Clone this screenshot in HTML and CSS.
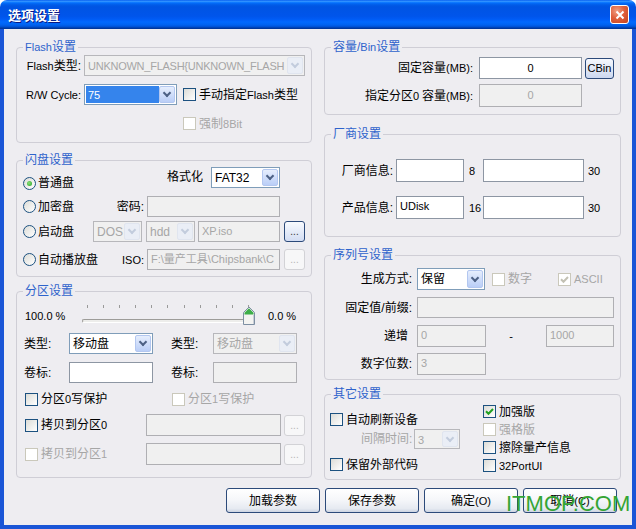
FILE: index.html
```html
<!DOCTYPE html>
<html lang="zh-CN">
<head>
<meta charset="utf-8">
<title>选项设置</title>
<link rel="stylesheet" href="styles.css">
</head>
<body>
<div class="window">
  <div class="titlebar">
    <span class="title">选项设置</span>
    <span class="close"><svg width="10" height="10" viewBox="0 0 10 10"><path d="M1.5 1.5L8.5 8.5M8.5 1.5L1.5 8.5" stroke="#fff" stroke-width="2"/></svg></span>
  </div>
  <div class="frame">
    <div class="columns">
      <div class="col col-left">
        <section class="group g-flash">
          <div class="gtitle"><span class="en">Flash</span>设置</div>
          <div class="row r-f1">
            <span class="lbl lbl-f"><span class="en">Flash</span>类型:</span>
            <div class="combo dis c-flash"><span class="ctext en">UNKNOWN_FLASH{UNKNOWN_FLASH</span><span class="cbtn"></span></div>
          </div>
          <div class="row r-f2">
            <span class="lbl lbl-f en">R/W Cycle:</span>
            <div class="combo c-cycle"><span class="ctext sel en">75</span><span class="cbtn"></span></div>
            <span class="cbi cbi-manual"><span class="cb"></span><span>手动指定<span class="en">Flash</span>类型</span></span>
          </div>
          <div class="row r-f3">
            <span class="cbi dis cbi-8bit"><span class="cb"></span><span>强制<span class="en">8Bit</span></span></span>
          </div>
        </section>

        <section class="group g-disk">
          <div class="gtitle">闪盘设置</div>
          <div class="row r-a">
            <span class="rbi rbi-a"><span class="rb on"></span><span>普通盘</span></span>
            <span class="lbl lbl-fmt">格式化</span>
            <div class="combo c-fmt"><span class="ctext">FAT32</span><span class="cbtn"></span></div>
          </div>
          <div class="row r-b">
            <span class="rbi rbi-b"><span class="rb"></span><span>加密盘</span></span>
            <span class="lbl lbl-pw">密码:</span>
            <div class="inp dis i-pw"></div>
          </div>
          <div class="row r-c">
            <span class="rbi rbi-c"><span class="rb"></span><span>启动盘</span></span>
            <div class="combo dis c-dos"><span class="ctext">DOS</span><span class="cbtn"></span></div>
            <div class="combo dis c-hdd"><span class="ctext">hdd</span><span class="cbtn"></span></div>
            <div class="inp dis i-xp">XP.iso</div>
            <span class="sbtn">...</span>
          </div>
          <div class="row r-d">
            <span class="rbi rbi-b"><span class="rb"></span><span>自动播放盘</span></span>
            <span class="lbl lbl-pw en">ISO:</span>
            <div class="inp dis i-pw">F:\量产工具\Chipsbank\C</div>
            <span class="sbtn dis">...</span>
          </div>
        </section>

        <section class="group g-part">
          <div class="gtitle">分区设置</div>
          <div class="row r-sl">
            <span class="pct pct1">100.0 %</span>
            <div class="slider">
              <div class="ticks"><i></i><i></i><i></i><i></i><i></i><i></i><i></i><i></i><i></i><i></i><i></i></div>
              <div class="track"></div>
              <svg class="thumb" width="12" height="19" viewBox="0 0 12 19"><path d="M0.5 18.5V6.5L6 1L11.5 6.5V18.5Z" fill="#F3F3F1" stroke="#7D8FA3"/><path d="M1.5 6.8L6 2.3L10.5 6.8V8.5H1.5Z" fill="#3DAE48"/><path d="M10.5 9V18" stroke="#C9CED6"/></svg>
            </div>
            <span class="pct pct2">0.0 %</span>
          </div>
          <div class="row r-type">
            <span class="lbl lbl-t">类型:</span>
            <div class="combo c-type"><span class="ctext">移动盘</span><span class="cbtn"></span></div>
            <span class="lbl lbl-t2">类型:</span>
            <div class="combo dis c-type"><span class="ctext">移动盘</span><span class="cbtn"></span></div>
          </div>
          <div class="row r-vol">
            <span class="lbl lbl-t">卷标:</span>
            <div class="inp i-vol"></div>
            <span class="lbl lbl-t2">卷标:</span>
            <div class="inp dis i-vol"></div>
          </div>
          <div class="row r-wp">
            <span class="cbi cbi-wp"><span class="cb"></span><span>分区<span class="en">0</span>写保护</span></span>
            <span class="cbi dis"><span class="cb"></span><span>分区<span class="en">1</span>写保护</span></span>
          </div>
          <div class="row r-cp0">
            <span class="cbi cbi-cp"><span class="cb"></span><span>拷贝到分区<span class="en">0</span></span></span>
            <div class="inp dis i-cp"></div>
            <span class="sbtn dis">...</span>
          </div>
          <div class="row r-cp1">
            <span class="cbi dis cbi-cp"><span class="cb"></span><span>拷贝到分区<span class="en">1</span></span></span>
            <div class="inp dis i-cp"></div>
            <span class="sbtn dis">...</span>
          </div>
        </section>
      </div>

      <div class="col col-right">
        <section class="group g-cap">
          <div class="gtitle">容量/<span class="en">Bin</span>设置</div>
          <div class="row r-c1">
            <span class="lbl lbl-cap">固定容量<span class="en">(MB):</span></span>
            <div class="inp i-cap center">0</div>
            <span class="cbin">CBin</span>
          </div>
          <div class="row r-c2">
            <span class="lbl lbl-cap">指定分区<span class="en">0 </span>容量<span class="en">(MB):</span></span>
            <div class="inp dis i-cap center">0</div>
          </div>
        </section>

        <section class="group g-vendor">
          <div class="gtitle">厂商设置</div>
          <div class="row r-v1">
            <span class="lbl lbl-v">厂商信息:</span>
            <div class="inp i-v1"></div>
            <span class="num num1">8</span>
            <div class="inp i-v2"></div>
            <span class="num num2">30</span>
          </div>
          <div class="row r-v2">
            <span class="lbl lbl-v">产品信息:</span>
            <div class="inp i-v1">UDisk</div>
            <span class="num num1">16</span>
            <div class="inp i-v2"></div>
            <span class="num num2">30</span>
          </div>
        </section>

        <section class="group g-sn">
          <div class="gtitle">序列号设置</div>
          <div class="row r-s1">
            <span class="lbl lbl-sn">生成方式:</span>
            <div class="combo c-gen"><span class="ctext">保留</span><span class="cbtn"></span></div>
            <span class="cbi dis cbi-num"><span class="cb"></span><span>数字</span></span>
            <span class="cbi dis"><span class="cb"><svg width="9" height="9" viewBox="0 0 9 9"><path d="M1 4.2L3.5 6.7L8 2" fill="none" stroke="#C3C1B4" stroke-width="2"/></svg></span><span class="en">ASCII</span></span>
          </div>
          <div class="row r-s2">
            <span class="lbl lbl-sn">固定值/前缀:</span>
            <div class="inp dis i-prefix"></div>
          </div>
          <div class="row r-s3">
            <span class="lbl lbl-sn lbl-inc">递增</span>
            <div class="inp dis i-sn">0</div>
            <span class="dash">-</span>
            <div class="inp dis i-sn2">1000</div>
          </div>
          <div class="row r-s4">
            <span class="lbl lbl-sn">数字位数:</span>
            <div class="inp dis i-sn">3</div>
          </div>
        </section>

        <section class="group g-other">
          <div class="gtitle">其它设置</div>
          <div class="other-cols">
            <div class="other-left">
              <span class="cbi o-auto"><span class="cb"></span><span>自动刷新设备</span></span>
              <div class="row r-int">
                <span class="lbl lbl-int">间隔时间:</span>
                <div class="combo dis c-int"><span class="ctext en">3</span><span class="cbtn"></span></div>
              </div>
              <span class="cbi o-keep"><span class="cb"></span><span>保留外部代码</span></span>
            </div>
            <div class="other-right">
              <span class="cbi"><span class="cb"><svg width="9" height="9" viewBox="0 0 9 9"><path d="M1 4.2L3.5 6.7L8 2" fill="none" stroke="#21A121" stroke-width="2"/></svg></span><span>加强版</span></span>
              <span class="cbi dis"><span class="cb"></span><span>强格版</span></span>
              <span class="cbi"><span class="cb"></span><span>擦除量产信息</span></span>
              <span class="cbi"><span class="cb"></span><span class="en">32PortUI</span></span>
            </div>
          </div>
        </section>
      </div>
    </div>

    <div class="buttons">
      <span class="btn">加载参数</span>
      <span class="btn">保存参数</span>
      <span class="btn">确定<span class="en">(O)</span></span>
      <span class="btn">取消<span class="en">(C)</span></span>
    </div>
  </div>
  <span class="watermark">ITMOP.COM</span>
</div>
</body>
</html>
```
FILE: styles.css
```css
* { box-sizing: border-box; }
html, body { margin: 0; padding: 0; }
body {
  width: 636px;
  height: 529px;
  overflow: hidden;
  background: #ffffff;
  font-family: "Liberation Sans", "Noto Sans CJK SC", sans-serif;
  font-size: 12px;
  line-height: 14px;
  color: #000;
}
.en { font-size: 11px; }

.window {
  position: relative;
  width: 636px;
  height: 529px;
  display: flex;
  flex-direction: column;
}

/* ---------- title bar ---------- */
.titlebar {
  height: 29px;
  flex: none;
  display: flex;
  align-items: center;
  justify-content: space-between;
  padding: 0 7px 0 8px;
  border-radius: 7px 7px 0 0;
  background: linear-gradient(to bottom,
    #0058EE 0%, #3593FF 4%, #288EFF 6%, #127DFF 8%, #036FFC 10%,
    #0262EE 14%, #0057E5 20%, #0054E3 24%, #0055EB 56%, #005BF5 66%,
    #026AFE 76%, #0062EF 86%, #0052D6 92%, #0040AB 96%, #003092 100%);
}
.title {
  color: #fff;
  font-family: "Noto Sans CJK SC", sans-serif;
  font-weight: bold;
  font-size: 13px;
  line-height: 16px;
  text-shadow: 1px 1px 0 #0A1883;
}
.close {
  width: 19px;
  height: 19px;
  border: 1px solid #fff;
  border-radius: 3px;
  display: flex;
  align-items: center;
  justify-content: center;
  background: radial-gradient(circle at 35% 30%, #F0A085 0%, #E0603C 45%, #C4431F 100%);
}

/* ---------- frame ---------- */
.frame {
  flex: 1;
  display: flex;
  flex-direction: column;
  background: #EEEDF1;
  border: 4px solid #1A55D6;
  border-top: none;
  padding: 18px 11px 0 12px;
}
.columns { display: flex; gap: 12px; align-items: flex-start; }
.col-left { width: 296px; }
.col-right { width: 297px; }

.group {
  border: 1px solid #CFCED6;
  border-radius: 4px;
  padding: 0 5px;
}
.gtitle {
  margin: -8px 0 0 1px;
  padding: 0 2px;
  width: fit-content;
  height: 15px;
  line-height: 15px;
  background: #EEEDF1;
  color: #2E63CC;
}
.g-flash { height: 96px; }
.g-disk { margin-top: 17px; height: 117px; }
.g-part { margin-top: 14px; height: 187px; }
.g-cap { height: 68px; }
.g-vendor { margin-top: 19px; height: 103px; }
.g-sn { margin-top: 18px; height: 125px; }
.g-other { margin-top: 14px; height: 86px; }

.row { display: flex; align-items: center; }
.lbl { flex: none; white-space: nowrap; }

/* ---------- controls ---------- */
.inp {
  flex: none;
  height: 100%;
  border: 1px solid #8D96A3;
  background: #fff;
  padding: 2px 3px;
  font-size: 11px;
  line-height: 14px;
  white-space: nowrap;
  overflow: hidden;
}
.inp.dis { background: #F0F0F0; border-color: #AFAFB3; color: #A6A6A6; }
.inp.center { text-align: center; }

.combo {
  flex: none;
  height: 100%;
  display: flex;
  border: 1px solid #7F9DB9;
  background: #fff;
  padding: 1px;
}
.ctext {
  flex: 1;
  min-width: 0;
  padding: 1px 2px;
  line-height: 16px;
  white-space: nowrap;
  overflow: hidden;
}
.ctext.sel { background: #3584EC; color: #fff; }
.cbtn {
  flex: none;
  width: 16px;
  border: 1px solid #B3C7F0;
  border-radius: 2px;
  background: linear-gradient(to bottom, #E6EEFD, #BACEF7);
  display: flex;
  align-items: center;
  justify-content: center;
}
.cbtn::after {
  content: "";
  width: 4px;
  height: 4px;
  border-right: 2px solid #4D6185;
  border-bottom: 2px solid #4D6185;
  transform: rotate(45deg);
  margin-top: -3px;
}
.combo.dis { background: #F0F0F0; border-color: #B7B7BB; color: #A6A6A6; }
.combo.dis .cbtn { background: #EAEEF6; border-color: #E0E5EF; }
.combo.dis .cbtn::after { border-color: #C3CCDD; }

.cbi { flex: none; display: flex; align-items: center; white-space: nowrap; }
.cb {
  flex: none;
  width: 13px;
  height: 13px;
  margin-right: 3px;
  border: 1px solid #1C5180;
  background: linear-gradient(135deg, #DCDCD7 0%, #FFFFFF 100%);
  display: flex;
  align-items: center;
  justify-content: center;
}
.cbi.dis { color: #A6A6A6; }
.cbi.dis .cb { border-color: #CAC8BB; background: #FFFFFF; }

.rbi { flex: none; display: flex; align-items: center; white-space: nowrap; }
.rb {
  flex: none;
  width: 13px;
  height: 13px;
  margin: 0 2px 0 1px;
  border: 1px solid #1C5180;
  border-radius: 50%;
  background: linear-gradient(135deg, #DCDCD7 0%, #FFFFFF 100%);
  display: flex;
  align-items: center;
  justify-content: center;
}
.rb.on::after {
  content: "";
  width: 5px;
  height: 5px;
  border-radius: 50%;
  background: radial-gradient(circle at 40% 40%, #8BE07A, #21A121);
}

.sbtn {
  flex: none;
  width: 21px;
  height: 21px;
  margin-left: 4px;
  border: 1px solid #2C4A7A;
  border-radius: 3px;
  background: linear-gradient(to bottom, #F8FAFE, #D3DDF3);
  display: flex;
  align-items: flex-end;
  justify-content: center;
  font-size: 10px;
  line-height: 12px;
  padding-bottom: 3px;
  color: #333;
}
.sbtn.dis { border-color: #D2D2D6; background: #F7F7F8; color: #B5B5B5; }

.btn {
  flex: none;
  width: 94px;
  height: 25px;
  border: 1px solid #2C4A7A;
  border-radius: 3px;
  background: linear-gradient(to bottom, #FFFFFF 0%, #F6F7FA 45%, #E6EAF1 85%, #CCD4E2 100%);
  display: flex;
  align-items: center;
  justify-content: center;
}
.cbin {
  flex: none;
  width: 29px;
  height: 21px;
  margin-left: 3px;
  border: 1px solid #2C4A7A;
  border-radius: 3px;
  background: linear-gradient(to bottom, #F6F8FD, #CCD8F0);
  font-size: 11px;
  display: flex;
  align-items: center;
  justify-content: center;
}

/* ---------- Flash group ---------- */
.r-f1 { height: 21px; }
.r-f2 { margin-top: 8px; height: 21px; }
.r-f3 { margin-top: 12px; height: 13px; }
.lbl-f { width: 59px; text-align: right; }
.c-flash { width: 221px; margin-left: 3px; }
.c-flash .ctext { letter-spacing: -0.25px; }
.c-cycle { width: 93px; margin-left: 3px; }
.cbi-manual { margin-left: 6px; }
.cbi-8bit { margin-left: 161px; }

/* ---------- disk group ---------- */
.r-a { margin-top: -1px; height: 23px; }
.r-b { margin-top: 6px; height: 21px; }
.r-c { margin-top: 4px; height: 21px; }
.r-d { margin-top: 7px; height: 21px; }
.rbi-a { width: 145px; align-self: flex-end; }
.rbi-b { width: 92px; }
.rbi-c { width: 71px; }
.lbl-fmt { width: 44px; align-self: flex-start; padding-top: 3px; }
.c-fmt { width: 69px; height: 21px; align-self: flex-start; }
.lbl-pw { width: 30px; text-align: right; }
.i-pw { width: 133px; margin-left: 3px; }
.c-dos { width: 49px; }
.c-hdd { width: 49px; margin-left: 4px; }
.i-xp { width: 82px; margin-left: 3px; }

/* ---------- partition group ---------- */
.r-sl { margin-top: 4px; height: 21px; align-items: stretch; }
.pct { font-size: 11px; align-self: flex-end; padding-bottom: 1px; }
.pct1 { width: 60px; padding-left: 3px; }
.pct2 { margin-left: 12px; }
.slider { position: relative; width: 174px; flex: none; }
.ticks {
  display: flex;
  justify-content: space-between;
  width: 162px;
  height: 3px;
  margin: 2px 0 0 5px;
}
.ticks i { width: 1px; height: 3px; background: #9A9A9A; }
.track {
  width: 168px;
  height: 4px;
  margin-top: 11px;
  border: 1px solid;
  border-color: #9D9C99 #FFFFFF #FFFFFF #9D9C99;
  border-radius: 2px;
  background: #EDEDEB;
}
.thumb { position: absolute; left: 161px; top: 3px; }

.r-type { margin-top: 9px; height: 21px; }
.r-vol { margin-top: 8px; height: 21px; }
.r-wp { margin-top: 7px; height: 18px; }
.r-cp0 { margin-top: 6px; height: 22px; }
.r-cp1 { margin-top: 7px; height: 22px; }
.lbl-t { width: 47px; padding-left: 2px; }
.lbl-t2 { width: 60px; padding-left: 18px; }
.c-type, .i-vol { width: 84px; }
.cbi-wp { width: 147px; margin-left: 3px; }
.cbi-cp { width: 121px; margin-left: 3px; }
.i-cp { width: 135px; }
.r-cp0 .sbtn, .r-cp1 .sbtn { margin-left: 3px; }

/* ---------- capacity group ---------- */
.r-c1 { margin-top: 2px; height: 22px; }
.r-c2 { margin-top: 5px; height: 23px; }
.lbl-cap { width: 143px; text-align: right; }
.i-cap { width: 103px; margin-left: 6px; padding-top: 3px; }

/* ---------- vendor group ---------- */
.r-v1 { margin-top: 17px; height: 23px; }
.r-v2 { margin-top: 14px; height: 23px; }
.lbl-v { width: 66px; text-align: right; padding-right: 3px; }
.i-v1 { width: 68px; }
.i-v2 { width: 101px; }
.num { flex: none; font-size: 11px; }
.num1 { width: 19px; padding-left: 5px; }
.num2 { padding-left: 4px; }

/* ---------- serial group ---------- */
.r-s1 { margin-top: 5px; height: 22px; }
.r-s2 { margin-top: 7px; height: 21px; }
.r-s3 { margin-top: 7px; height: 22px; }
.r-s4 { margin-top: 6px; height: 22px; }
.lbl-sn { width: 87px; text-align: right; padding-right: 5px; }
.lbl-inc { padding-right: 9px; }
.c-gen { width: 68px; }
.cbi-num { width: 66px; margin-left: 7px; }
.i-prefix { width: 197px; }
.i-sn { width: 69px; }
.dash { flex: none; width: 60px; padding-right: 10px; text-align: center; font-size: 11px; }
.i-sn2 { width: 68px; }

/* ---------- other group ---------- */
.other-cols { display: flex; }
.other-left { width: 153px; display: flex; flex-direction: column; align-items: flex-start; }
.o-auto { margin-top: 11px; height: 13px; }
.r-int { margin-top: 3px; height: 20px; padding-left: 31px; }
.lbl-int { width: 53px; color: #A6A6A6; }
.c-int { width: 46px; }
.o-keep { margin-top: 9px; height: 13px; }
.other-right { display: flex; flex-direction: column; gap: 5px; padding-top: 3px; }
.other-right .cbi { height: 13px; }

/* ---------- buttons ---------- */
.buttons {
  margin-top: 8px;
  display: flex;
  justify-content: flex-end;
  gap: 5px;
  padding-right: 4px;
}

.watermark {
  position: absolute;
  left: 506px;
  top: 493px;
  font-family: "Liberation Sans", sans-serif;
  font-size: 22px;
  line-height: 22px;
  color: #34A534;
}
```
